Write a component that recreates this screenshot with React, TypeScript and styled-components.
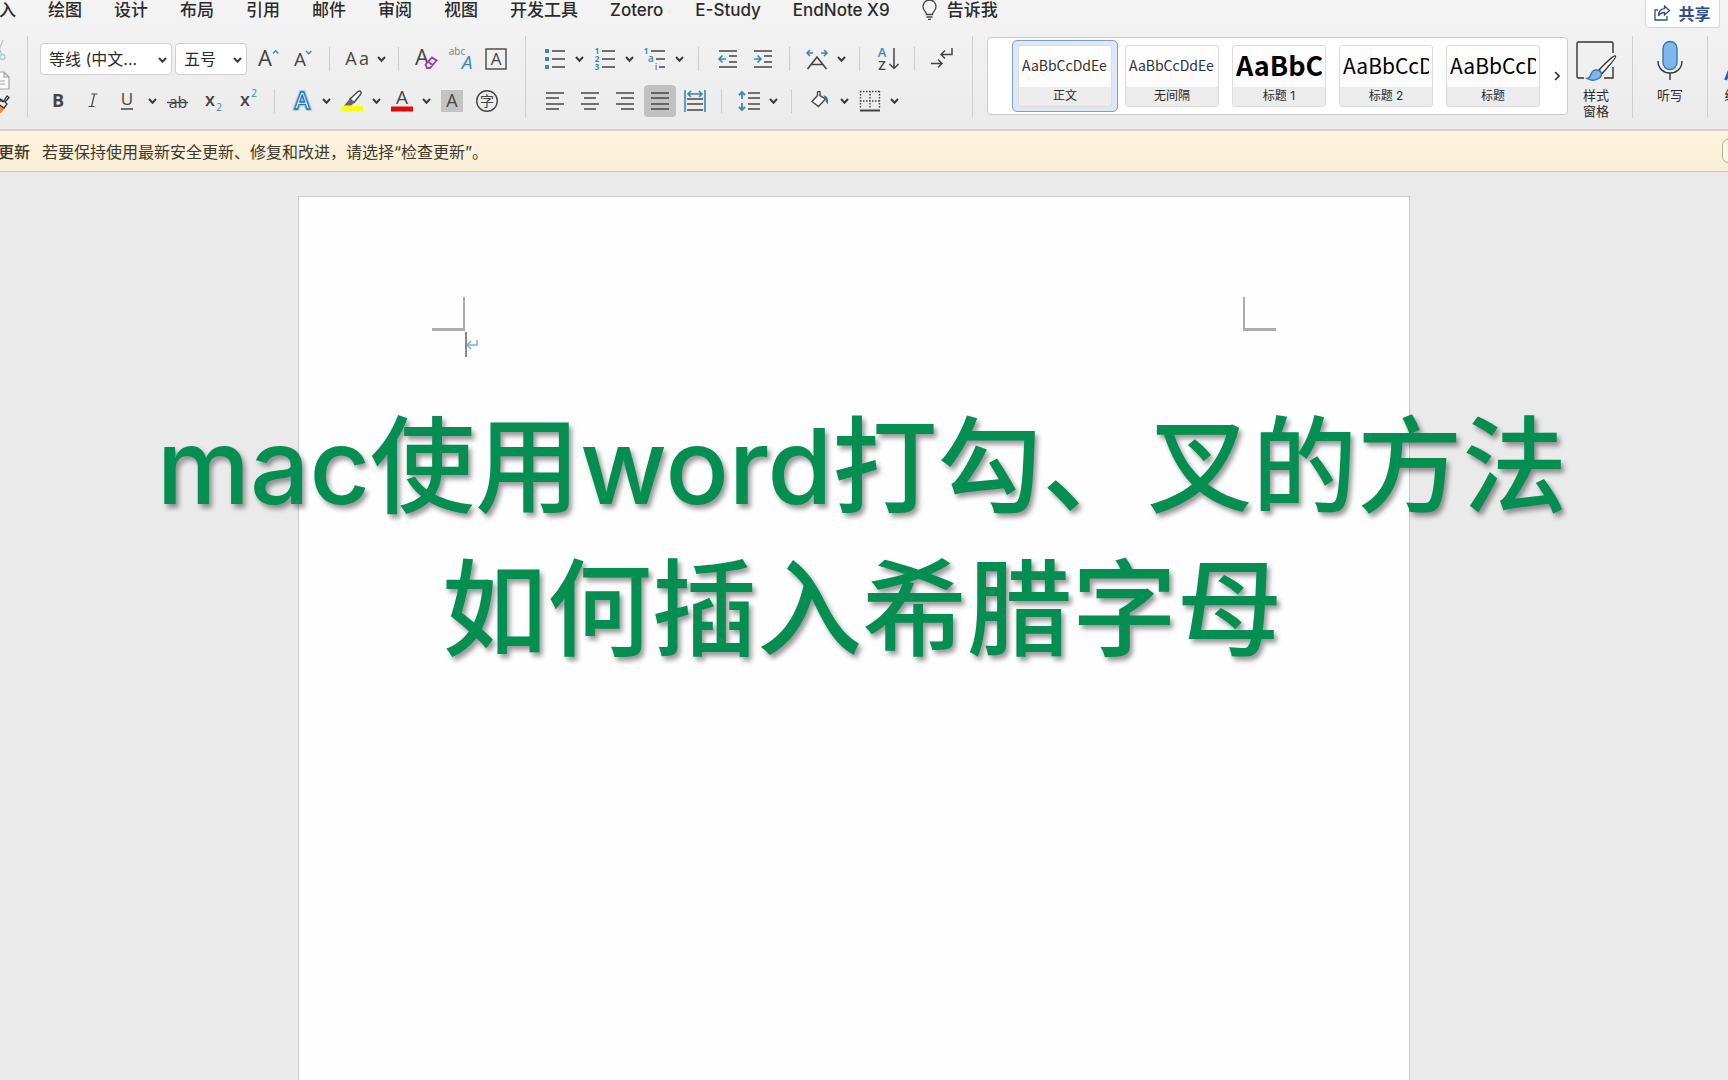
import React from "react";
import styled, { createGlobalStyle } from "styled-components";

const INK = "#454545";
const BLUE = "#3a86bd";

const Global = createGlobalStyle`
  * { box-sizing: border-box; }
  html, body { margin: 0; height: 100%; }
  #root { height: 100%; }
  body {
    font-family: Inter, "Noto Sans CJK SC", sans-serif;
    color: #2b2b2b;
    background: #eaeaea;
    overflow: hidden;
  }
  button, select { font-family: inherit; color: inherit; }
`;

const Shell = styled.div`
  position: relative;
  display: flex;
  flex-direction: column;
  height: 100vh;
  overflow: hidden;
`;

const Chrome = styled.header`
  flex: none;
  background: linear-gradient(#f4f4f4, #ebebeb);
  border-bottom: 2px solid #d6d1cb;
`;

const TabBar = styled.div`
  display: flex;
  justify-content: space-between;
  height: 36px;
  padding-right: 8px;
`;

const Tabs = styled.nav`
  display: flex;
  align-items: flex-start;
  gap: 32px;
  margin-left: -18px;
`;

const Tab = styled.button`
  display: flex;
  gap: 10px;
  align-items: center;
  flex: none;
  padding: 0;
  border: 0;
  background: none;
  height: 20px;
  font-size: 17px;
  line-height: 20px;
  font-weight: 500;
  white-space: nowrap;
`;

const Share = styled.button`
  display: flex;
  align-items: center;
  justify-content: center;
  gap: 7px;
  width: 75px;
  height: 28px;
  padding: 0 0 2px;
  border: 1px solid #d6d6d6;
  border-top: 0;
  border-radius: 0 0 4px 4px;
  background: #fff;
  color: #2f4f8c;
  font-size: 16px;
  font-weight: 600;
`;

const Ribbon = styled.div`
  display: flex;
  align-items: flex-start;
  height: 93px;
`;

const Group = styled.section<{ $pad?: string }>`
  flex: none;
  display: flex;
  flex-direction: column;
  gap: 10px;
  height: 82px;
  padding: ${(p) => p.$pad || "0"};
  border-right: 1px solid #cfcfcf;
`;

const Clipboard = styled(Group)`
  width: 28px;
  gap: 6px;
  padding-top: 4px;
`;

const StylesGroup = styled(Group)`
  flex-direction: row;
  gap: 8px;
`;

const Row = styled.div`
  display: flex;
  align-items: center;
  height: 32px;
  margin-top: 7px;
  & + & { margin-top: 0; }
`;

const Sep = styled.span<{ $m: number }>`
  width: 1px;
  height: 24px;
  margin: 0 ${(p) => p.$m}px;
  background: #cdcdcd;
`;

const Tool = styled.button<{ $on?: boolean }>`
  display: flex;
  align-items: center;
  justify-content: center;
  width: 35px;
  height: 32px;
  padding: 0;
  border: 0;
  background: none;
  svg { overflow: visible; }
  ${(p) =>
    p.$on &&
    `width: 32px; margin: 0 1px 0 2px; border-radius: 4px; background: #c1c1c1;`}
`;

const Drop = styled(Tool)`
  width: 15px;
`;

const ClipTool = styled(Tool)`
  width: 12px;
  height: 20px;
  justify-content: flex-start;
`;

const Combo = styled.label<{ $w: number }>`
  position: relative;
  display: block;
  width: ${(p) => p.$w}px;
  margin-right: 3px;
  svg {
    position: absolute;
    right: 5px;
    top: 14px;
    pointer-events: none;
  }
`;

const Select = styled.select`
  appearance: none;
  width: 100%;
  height: 32px;
  padding: 0 20px 0 8px;
  border: 1px solid #cfcfcf;
  border-radius: 4px;
  background: #fff;
  font-size: 16px;
  line-height: 30px;
`;

const Gallery = styled.div`
  flex: none;
  display: flex;
  align-items: center;
  gap: 1px;
  height: 78px;
  margin: 1px 0 0 14px;
  padding-left: 24px;
  border: 1px solid #cbcbcb;
  border-radius: 4px;
  background: #fff;
`;

const StyleCard = styled.button<{ $on?: boolean }>`
  width: 106px;
  height: 72px;
  padding: 4px 5px;
  border: 1px solid ${(p) => (p.$on ? "#7f9ccb" : "transparent")};
  border-radius: 5px;
  background: ${(p) => (p.$on ? "#dfe7f3" : "none")};
`;

const Card = styled.span`
  display: flex;
  flex-direction: column;
  height: 62px;
  border: 1px solid #dcdcdc;
  border-radius: 3px;
  background: linear-gradient(#fff, #f8f8f8);
  overflow: hidden;
`;

const Sample = styled.span<{ $size: number; $bold?: boolean }>`
  height: 41px;
  margin: 0 3px;
  overflow: hidden;
  text-align: left;
  white-space: nowrap;
  font-family: "Noto Sans CJK SC", sans-serif;
  font-size: ${(p) => p.$size}px;
  font-weight: ${(p) => (p.$bold ? 700 : 400)};
  color: ${(p) => (p.$size > 16 ? "#000" : "#333")};
  line-height: 38px;
`;

const CardName = styled.span`
  flex: 1;
  background: #ececec;
  font-size: 12px;
  line-height: 18px;
  text-align: center;
`;

const More = styled.button`
  width: 20px;
  height: 72px;
  padding: 0;
  border: 0;
  background: none;
`;

const BigTool = styled.button`
  display: flex;
  flex-direction: column;
  align-items: center;
  gap: 7px;
  padding: 4px 0 0;
  border: 0;
  background: none;
  font-size: 13px;
  line-height: 16px;
  svg { flex: none; overflow: visible; }
`;

const Notice = styled.div`
  flex: none;
  display: flex;
  align-items: center;
  gap: 12px;
  height: 41px;
  background: linear-gradient(#fef3de, #f9efd8);
  border-bottom: 1px solid #cdc4ae;
  color: #3f382b;
  font-size: 16px;
  white-space: nowrap;
  overflow: hidden;
  strong { margin-left: -2px; font-weight: 500; }
`;

const Check = styled.button`
  flex: none;
  width: 90px;
  height: 24px;
  margin: 0 -84px 0 auto;
  border: 1px solid #b5ad9c;
  border-radius: 6px;
  background: #fdf6e6;
`;

const Desk = styled.main`
  position: relative;
  flex: 1;
  display: flex;
  justify-content: center;
  padding: 24px 20px 0 0;
  background: #eaeaea;
  overflow: hidden;
`;

const Page = styled.article`
  width: 1112px;
  padding: 100px 133px;
  border: 1px solid #cacaca;
  border-bottom: 0;
  background: #fefefe;
`;

const Marks = styled.div`
  display: flex;
  justify-content: space-between;
`;

const Corner = styled.span<{ $side: "left" | "right" }>`
  width: 33px;
  height: 34px;
  border: 0 solid #ababab;
  border-bottom-width: 3px;
  border-${(p) => p.$side}-width: 2px;
`;

const Line = styled.p`
  display: flex;
  align-items: center;
  margin: 1px 0 0 33px;
  height: 25px;
  border-left: 2px solid #888;
`;

const Title = styled.h1`
  position: absolute;
  inset: 222px 4px auto 0;
  margin: 0;
  text-align: center;
  white-space: nowrap;
  font-size: 105px;
  line-height: 143px;
  font-weight: 500;
  color: #058e51;
  text-shadow: 3px 4px 5px rgba(0, 0, 0, 0.4);
`;

const Chevron = () => (
  <svg width="9" height="6" viewBox="0 0 9 6" fill="none" stroke="#3a3a3a" strokeWidth="2" aria-hidden>
    <path d="M1 1l3.500 3.700L8 1" />
  </svg>
);

const Ico = ({ children }: { children: React.ReactNode }) => (
  <svg width="22" height="22" viewBox="0 0 22 22" fill="none" stroke={INK} strokeWidth="1.400" aria-hidden>
    {children}
  </svg>
);

const SANS = '"Open Sans", sans-serif';

type GlyphProps = {
  x: number;
  y: number;
  s: number;
  c?: string;
  w?: number;
  i?: boolean;
  children: string;
};

const Glyph = ({ x, y, s, c = INK, w = 400, i, children }: GlyphProps) => (
  <text
    x={x}
    y={y}
    fontSize={s}
    fill={c}
    stroke="none"
    fontWeight={w}
    fontStyle={i ? "italic" : "normal"}
    fontFamily={'"Open Sans", "Noto Sans CJK SC", sans-serif'}
    textAnchor="middle"
  >
    {children}
  </text>
);

const Bars = ({ rows }: { rows: [number, number, number][] }) => (
  <>
    {rows.map(([x1, x2, y]) => (
      <path key={y} d={`M${x1} ${y}H${x2}`} strokeWidth="1.500" />
    ))}
  </>
);

const tabs = ["插入", "绘图", "设计", "布局", "引用", "邮件", "审阅", "视图", "开发工具", "Zotero", "E-Study", "EndNote X9"];

const styles = [
  { sample: "AaBbCcDdEe", name: "正文", size: 14 },
  { sample: "AaBbCcDdEe", name: "无间隔", size: 14 },
  { sample: "AaBbC", name: "标题 1", size: 27, bold: true },
  { sample: "AaBbCcD", name: "标题 2", size: 21 },
  { sample: "AaBbCcD", name: "标题", size: 21 },
];

const DropButton = ({ label }: { label: string }) => (
  <Drop aria-label={label}>
    <Chevron />
  </Drop>
);

const FontGroup = () => (
  <Group $pad="0 12px 0 12px">
    <Row>
      <Combo $w={132}>
        <Select aria-label="字体">
          <option>等线 (中文...</option>
        </Select>
        <Chevron />
      </Combo>
      <Combo $w={72}>
        <Select aria-label="字号">
          <option>五号</option>
        </Select>
        <Chevron />
      </Combo>
      <Tool aria-label="增大字号">
        <Ico>
          <Glyph x={8} y={18} s={22}>A</Glyph>
          <path d="M16 5.500l2.700-2.700 2.700 2.700" stroke={BLUE} />
        </Ico>
      </Tool>
      <Tool aria-label="减小字号">
        <Ico>
          <Glyph x={8} y={18} s={19}>A</Glyph>
          <path d="M14 3l2.700 2.700L19.400 3" stroke={BLUE} />
        </Ico>
      </Tool>
      <Sep $m={9} />
      <Tool aria-label="更改大小写">
        <Ico>
          <Glyph x={5} y={17} s={18}>A</Glyph>
          <Glyph x={18} y={17} s={18}>a</Glyph>
        </Ico>
      </Tool>
      <DropButton label="大小写选项" />
      <Sep $m={9} />
      <Tool aria-label="清除格式">
        <Ico>
          <Glyph x={7} y={17} s={22}>A</Glyph>
          <path d="M10.500 16.500l6.500-7 4.500 3-6.500 7.500h-3zM13 13.500l5 4" stroke="#9a3fa5" strokeWidth="1.800" fill="#f1f1f1" />
        </Ico>
      </Tool>
      <Tool aria-label="拼音指南">
        <Ico>
          <Glyph x={7} y={7} s={10} c="#777">abc</Glyph>
          <Glyph x={17} y={21} s={19} c={BLUE} i>A</Glyph>
        </Ico>
      </Tool>
      <Tool aria-label="字符边框">
        <Ico>
          <rect x="1" y="1" width="20" height="20" />
          <Glyph x={11} y={17} s={17}>A</Glyph>
        </Ico>
      </Tool>
    </Row>
    <Row>
      <Tool aria-label="加粗">
        <Ico>
          <Glyph x={11} y={17} s={18} w={700}>B</Glyph>
        </Ico>
      </Tool>
      <Tool aria-label="倾斜">
        <Ico>
          <path d="M9.500 4h6M6.500 16.500h6M12.500 4l-3 12.500" strokeWidth="1.200" />
        </Ico>
      </Tool>
      <Tool aria-label="下划线">
        <Ico>
          <Glyph x={10} y={15} s={17}>U</Glyph>
          <path d="M4 19h12" strokeWidth="1.500" />
        </Ico>
      </Tool>
      <DropButton label="下划线选项" />
      <Tool aria-label="删除线">
        <Ico>
          <Glyph x={11} y={18} s={16}>ab</Glyph>
          <path d="M0 12.500h21" />
        </Ico>
      </Tool>
      <Tool aria-label="下标">
        <Ico>
          <Glyph x={8} y={16} s={18} w={600}>x</Glyph>
          <Glyph x={17} y={21} s={10} c={BLUE} w={500}>2</Glyph>
        </Ico>
      </Tool>
      <Tool aria-label="上标">
        <Ico>
          <Glyph x={8} y={16} s={18} w={600}>x</Glyph>
          <Glyph x={17} y={7} s={10} c={BLUE} w={500}>2</Glyph>
        </Ico>
      </Tool>
      <Sep $m={9} />
      <Tool aria-label="文本效果">
        <svg width="22" height="22" viewBox="0 0 22 22" fontFamily={SANS} fontSize="23" fontWeight="600" textAnchor="middle" aria-hidden>
          <text x="11" y="19" fill="#2673b5" stroke="#9cc9ee" strokeWidth="3.500">A</text>
          <text x="11" y="19" fill="#fff" stroke="#2673b5" strokeWidth="1.300" aria-hidden>A</text>
        </svg>
      </Tool>
      <DropButton label="文本效果选项" />
      <Tool aria-label="突出显示">
        <Ico>
          <path d="M0.500 18.500H22" stroke="#fbfb18" strokeWidth="5" />
          <path d="M9 9l8-7.500c2-1.500 4 .5 2.800 2.500L13 12.500z" fill="#fff" />
          <path d="M9 8.500l4 4.500-3 2.500H3z" fill="#666" stroke="none" />
        </Ico>
      </Tool>
      <DropButton label="突出显示颜色" />
      <Tool aria-label="字体颜色">
        <Ico>
          <Glyph x={11} y={14} s={19}>A</Glyph>
          <path d="M0 19h22" stroke="#dc0b0b" strokeWidth="5" />
        </Ico>
      </Tool>
      <DropButton label="字体颜色选项" />
      <Tool aria-label="字符底纹">
        <Ico>
          <rect width="22" height="22" fill="#c3c3c3" stroke="none" />
          <Glyph x={11} y={17} s={18}>A</Glyph>
        </Ico>
      </Tool>
      <Tool aria-label="带圈字符">
        <Ico>
          <circle cx="11" cy="11" r="10.300" />
          <Glyph x={11} y={16} s={14}>字</Glyph>
        </Ico>
      </Tool>
    </Row>
  </Group>
);

const ParagraphGroup = () => (
  <Group $pad="0 13px 0 11px">
    <Row>
      <Tool aria-label="项目符号">
        <Ico>
          <path d="M1 3h4M1 11h4M1 19h4" stroke={BLUE} strokeWidth="4" />
          <Bars rows={[[8, 21, 3], [8, 21, 11], [8, 21, 19]]} />
        </Ico>
      </Tool>
      <DropButton label="项目符号库" />
      <Tool aria-label="编号">
        <Ico>
          {["1", "2", "3"].map((n, i) => (
            <Glyph key={n} x={3} y={6 + i * 8} s={8} c={BLUE} w={700}>{n}</Glyph>
          ))}
          <Bars rows={[[8, 21, 3], [8, 21, 11], [8, 21, 19]]} />
        </Ico>
      </Tool>
      <DropButton label="编号库" />
      <Tool aria-label="多级列表">
        <Ico>
          <Glyph x={2} y={6} s={8} c={BLUE} w={700}>1</Glyph>
          <Glyph x={7} y={14} s={10} c={BLUE} w={600}>a</Glyph>
          <Glyph x={12} y={22} s={9} c={BLUE} w={600}>i</Glyph>
          <Bars rows={[[7, 21, 3], [12, 21, 11], [15, 21, 19]]} />
        </Ico>
      </Tool>
      <DropButton label="列表库" />
      <Sep $m={11} />
      <Tool aria-label="减少缩进">
        <Ico>
          <Bars rows={[[2, 20, 3], [12, 20, 8], [12, 20, 14], [2, 20, 19]]} />
          <path d="M9 11H2.500M5.500 7.500L2 11l3.500 3.500" stroke={BLUE} strokeWidth="1.700" />
        </Ico>
      </Tool>
      <Tool aria-label="增加缩进">
        <Ico>
          <Bars rows={[[2, 20, 3], [12, 20, 8], [12, 20, 14], [2, 20, 19]]} />
          <path d="M2 11h6.500M5.500 7.500L9 11l-3.500 3.500" stroke={BLUE} strokeWidth="1.700" />
        </Ico>
      </Tool>
      <Sep $m={9} />
      <Tool aria-label="中文版式">
        <Ico>
          <path d="M1.500 21L11 9l9.500 12M5.500 16.500h11" strokeWidth="1.700" />
          <path d="M7 5H1M4 2L1 5l3 3M15 5h6M18 2l3 3-3 3" stroke={BLUE} strokeWidth="1.600" />
        </Ico>
      </Tool>
      <DropButton label="中文版式选项" />
      <Sep $m={10} />
      <Tool aria-label="排序">
        <Ico>
          <Glyph x={5} y={9} s={13} c={BLUE} w={600}>A</Glyph>
          <Glyph x={5} y={22} s={13} w={600}>Z</Glyph>
          <path d="M17 0v20.500M12.500 16l4.500 4.500 4.500-4.500" strokeWidth="1.500" />
        </Ico>
      </Tool>
      <Sep $m={9} />
      <Tool aria-label="显示编辑标记">
        <Ico>
          <path d="M21 0v6.500H10M14 2.500l-4 4 4 4M0 15.500h11M7 11.500l4 4-4 4" strokeWidth="1.500" />
        </Ico>
      </Tool>
    </Row>
    <Row>
      <Tool aria-label="左对齐">
        <Ico>
          <Bars rows={[[2, 20, 3], [2, 15, 8], [2, 20, 14], [2, 15, 19]]} />
        </Ico>
      </Tool>
      <Tool aria-label="居中">
        <Ico>
          <Bars rows={[[2, 20, 3], [5, 17, 8], [2, 20, 14], [5, 17, 19]]} />
        </Ico>
      </Tool>
      <Tool aria-label="右对齐">
        <Ico>
          <Bars rows={[[2, 20, 3], [7, 20, 8], [2, 20, 14], [7, 20, 19]]} />
        </Ico>
      </Tool>
      <Tool aria-label="两端对齐" aria-pressed $on>
        <Ico>
          <Bars rows={[[2, 20, 3], [2, 20, 8], [2, 20, 14], [2, 20, 19]]} />
        </Ico>
      </Tool>
      <Tool aria-label="分散对齐">
        <Ico>
          <path d="M1 0v22M21 0v22M3.500 4h15M7 1L4 4l3 3M15 1l3 3-3 3" stroke={BLUE} strokeWidth="1.600" />
          <Bars rows={[[3, 19, 9], [3, 19, 14], [3, 19, 20]]} />
        </Ico>
      </Tool>
      <Sep $m={9} />
      <Tool aria-label="行距">
        <Ico>
          <path d="M4 2v7M1 5l3-3 3 3M4 13v7M1 17l3 3 3-3" stroke={BLUE} strokeWidth="1.800" />
          <Bars rows={[[10, 22, 3], [10, 22, 8], [10, 22, 14], [10, 22, 19]]} />
        </Ico>
      </Tool>
      <DropButton label="行距选项" />
      <Sep $m={10} />
      <Tool aria-label="底纹">
        <Ico>
          <path d="M9 5L3 11.500l6.500 5 7-7.500-5.500-3.500V2.500c0-1.500-2.500-1.500-2.500 0V6" fill="#fff" />
          <path d="M14.500 5.500c4 .5 5 3 4.500 8.500-2-1-2.500-3-2.500-5z" fill="#2f6fa5" stroke="none" />
        </Ico>
      </Tool>
      <DropButton label="底纹颜色" />
      <Tool aria-label="边框">
        <Ico>
          <path d="M1 1.500h20M1 11h20M1.500 1v18M11 1v18M20.500 1v18" strokeDasharray="1.500 1.500" />
          <path d="M1 20.500h20" strokeWidth="2" />
        </Ico>
      </Tool>
      <DropButton label="边框选项" />
    </Row>
  </Group>
);

const StylesSection = () => (
  <StylesGroup $pad="0 16px 0 0">
    <Gallery>
      {styles.map((s, i) => (
        <StyleCard key={s.name} $on={i === 0}>
          <Card>
            <Sample $size={s.size} $bold={s.bold}>{s.sample}</Sample>
            <CardName>{s.name}</CardName>
          </Card>
        </StyleCard>
      ))}
      <More aria-label="更多样式">
        <svg width="6" height="10" viewBox="0 0 6 10" fill="none" stroke="#333" strokeWidth="1.600" aria-hidden>
          <path d="M1 1l4 4-4 4" />
        </svg>
      </More>
    </Gallery>
    <BigTool>
      <svg width="40" height="40" viewBox="0 0 40 40" fill="none" stroke="#333" strokeWidth="1.400" aria-hidden>
        <path d="M37 13V3.500a1.500 1.500 0 0 0-1.500-1.500H2.500A1.500 1.500 0 0 0 1 3.500v33A1.500 1.500 0 0 0 2.500 38H8M28 38h9V27" />
        <path d="M39.500 16c-1.500-1.500-11 8-16.500 14l3 3.500C31 28 41 17.500 39.500 16z" fill="#fff" />
        <path d="M11 38.500c5 0 2.500-8.500 9-8.500 6 0 7 5.500 3 8.300s-9 2.200-12 .2z" fill="#7db8ec" stroke="#3677b3" />
      </svg>
      <span>
        样式
        <br />
        窗格
      </span>
    </BigTool>
  </StylesGroup>
);

export default function App() {
  return (
    <Shell>
      <Global />
      <Chrome>
        <TabBar>
          <Tabs>
            {tabs.map((t) => (
              <Tab key={t}>{t}</Tab>
            ))}
            <Tab>
              <svg width="15" height="20" viewBox="0 0 15 20" fill="none" stroke={INK} strokeWidth="1.300" aria-hidden>
                <path d="M4.500 14.500c0-3-3.500-3.500-3.500-8a6.500 6.500 0 0 1 13 0c0 4.500-3.500 5-3.500 8zM4.500 17h6M6 19.300h3" />
              </svg>
              告诉我
            </Tab>
          </Tabs>
          <Share>
            <svg width="17" height="16" viewBox="0 0 17 16" fill="none" stroke="#2f4f8c" strokeWidth="1.300" aria-hidden>
              <path d="M4 5H1v10h12v-4M10.500 1l5 4.500-5 4.500V7.500C7 7.500 5.500 9 4.500 11c0-4 2-7 6-7.300z" />
            </svg>
            共享
          </Share>
        </TabBar>
        <Ribbon>
          <Clipboard>
            <ClipTool aria-label="剪切">
              <svg width="12" height="20" viewBox="0 0 12 20" fill="none" aria-hidden>
                <path d="M3 0L-3 15M-3 3l4.500 11" stroke="#b5b5b5" />
                <circle cx="2.500" cy="17" r="2.500" stroke="#a9c9e6" strokeWidth="1.300" />
              </svg>
            </ClipTool>
            <ClipTool aria-label="复制">
              <svg width="12" height="20" viewBox="0 0 12 20" fill="#fafafa" stroke="#a5a5a5" strokeWidth="1.200" aria-hidden>
                <path d="M-4 6h8l5 5v12h-13zM4 6v5h5M-2 15h7M-2 18h7" />
              </svg>
            </ClipTool>
            <ClipTool aria-label="格式刷">
              <svg width="12" height="20" viewBox="0 0 12 20" fill="none" aria-hidden>
                <path d="M-2 12l7 4-4 5h-4z" fill="#ee8a3c" />
                <path d="M-1 10l3-2 1.500 1.500L7 4l2 1.500L5 10l2 2-3 4-6-4M-1 6l4 4" stroke="#333" strokeWidth="1.300" />
              </svg>
            </ClipTool>
          </Clipboard>
          <FontGroup />
          <ParagraphGroup />
          <StylesSection />
          <Group $pad="0 24px">
            <BigTool>
              <svg width="26" height="40" viewBox="0 0 26 40" fill="none" stroke="#333" strokeWidth="1.400" aria-hidden>
                <rect x="6" y="1.500" width="14" height="28" rx="7" fill="#7db8ec" stroke="#3677b3" />
                <path d="M1 21c0 16 24 16 24 0M13 33v7" />
              </svg>
              听写
            </BigTool>
          </Group>
          <Group $pad="0 0 0 16px">
            <BigTool>
              <svg width="40" height="40" viewBox="0 0 40 40" fill="none" stroke="#2f5fb0" strokeWidth="3" aria-hidden>
                <path d="M1.500 40L14 10l12 30" />
              </svg>
              编辑器
            </BigTool>
          </Group>
        </Ribbon>
      </Chrome>
      <Notice role="status">
        <strong>更新</strong>
        <span>若要保持使用最新安全更新、修复和改进，请选择“检查更新”。</span>
        <Check aria-label="检查更新" />
      </Notice>
      <Desk>
        <Page>
          <Marks>
            <Corner $side="right" />
            <Corner $side="left" />
          </Marks>
          <Line>
            <svg width="12" height="12" viewBox="0 0 12 12" fill="none" stroke="#6fb3e0" strokeWidth="1.500" aria-hidden>
              <path d="M10 1v5H0M4 2L0 6l4 4" />
            </svg>
          </Line>
        </Page>
        <Title>
          mac使用word打勾、叉的方法
          <br />
          如何插入希腊字母
        </Title>
      </Desk>
    </Shell>
  );
}
